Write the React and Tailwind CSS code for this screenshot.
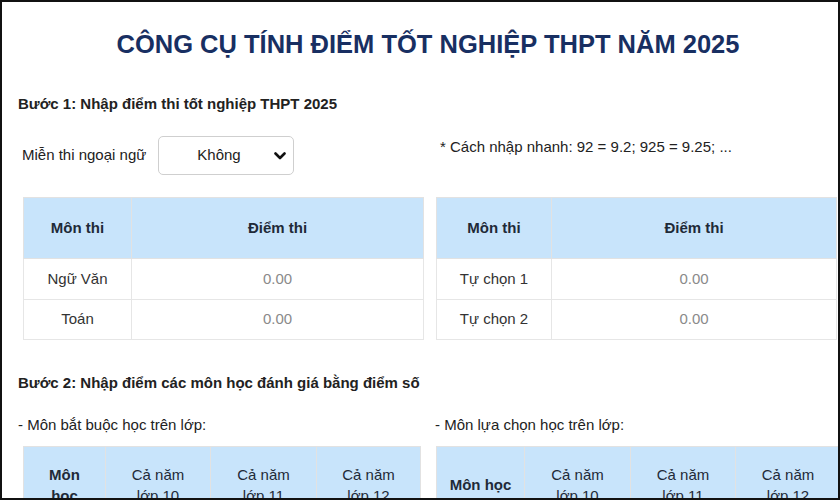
import React from "react";

const font = { fontFamily: '"Liberation Sans", Arial, sans-serif' };

function ChevronDown() {
  return (
    <svg width="12" height="8" viewBox="0 0 12 8" fill="none">
      <path d="M1.5 1.5 L6 6 L10.5 1.5" stroke="#111" strokeWidth="2.6" strokeLinecap="round" strokeLinejoin="round" />
    </svg>
  );
}

function ExamTable({ rows, firstCol }) {
  return (
    <table className="w-full table-fixed border-collapse text-[15px]">
      <colgroup>
        <col className={firstCol} />
        <col />
      </colgroup>
      <thead>
        <tr className="h-[61px] bg-[#c8e4fb]">
          <th className="border border-[#e2e2e2] font-bold text-[#1f2a38]">Môn thi</th>
          <th className="border border-[#e2e2e2] font-bold text-[#1f2a38]">Điểm thi</th>
        </tr>
      </thead>
      <tbody>
        {rows.map((r, i) => (
          <tr key={r} className={i === 0 ? "h-[41px]" : "h-[40px]"}>
            <td className="border border-[#e6e6e6] text-center text-[#333]">{r}</td>
            <td className="border border-[#e6e6e6] text-center text-[#8a8a8a]">0.00</td>
          </tr>
        ))}
      </tbody>
    </table>
  );
}

function YearTable({ cols, wrapFirst }) {
  return (
    <table className="table-fixed border-collapse text-[15px]">
      <colgroup>
        {cols.map((w, i) => (
          <col key={i} style={{ width: w }} />
        ))}
      </colgroup>
      <thead>
        <tr className="h-[76px] bg-[#c8e4fb] leading-[21px]">
          <th className="border border-[#e2e2e2] px-2 font-bold text-[#1f2a38]">
            {wrapFirst ? (
              <>
                Môn
                <br />
                học
              </>
            ) : (
              "Môn học"
            )}
          </th>
          {["10", "11", "12"].map((n) => (
            <th key={n} className="border border-[#e2e2e2] font-normal text-[#1f2a38]">
              Cả năm
              <br />
              lớp {n}
            </th>
          ))}
        </tr>
      </thead>
    </table>
  );
}

export default function App() {
  return (
    <div
      style={font}
      className="w-[840px] h-[500px] overflow-hidden border-2 border-[#111] bg-white text-[#222]"
    >
      <div className="pl-[16px] pt-[27px]">
        <h1 className="text-center text-[25.5px] leading-[30px] font-bold text-[#182f62]">
          CÔNG CỤ TÍNH ĐIỂM TỐT NGHIỆP THPT NĂM 2025
        </h1>
        <p className="mt-[35px] text-[15px] leading-[20px] font-bold">
          Bước 1: Nhập điểm thi tốt nghiệp THPT 2025
        </p>

        <div className="mt-[22px] grid grid-cols-[401px_401px] gap-x-[12px] pl-[5px]">
          <div className="flex items-center gap-[12px]">
            <span className="text-[15px] -ml-px">Miễn thi ngoại ngữ</span>
            <div className="flex h-[39px] w-[136px] items-center rounded-[5px] border border-[#cfcfcf] pl-[38px] pr-[7px]">
              <span className="text-[15px] flex-1">Không</span>
              <ChevronDown />
            </div>
          </div>
          <div className="pl-[4px] pt-[2px] text-[15px] leading-[18px]">
            * Cách nhập nhanh: 92 = 9.2; 925 = 9.25; ...
          </div>

          <div className="mt-[22px]">
            <ExamTable rows={["Ngữ Văn", "Toán"]} firstCol="w-[108px]" />
          </div>
          <div className="mt-[22px]">
            <ExamTable rows={["Tự chọn 1", "Tự chọn 2"]} firstCol="w-[115px]" />
          </div>
        </div>

        <p className="mt-[33px] text-[15px] leading-[20px] font-bold">
          Bước 2: Nhập điểm các môn học đánh giá bằng điểm số
        </p>

        <div className="mt-[22px] grid grid-cols-[417px_420px]">
          <div>
            <p className="text-[15px] leading-[20px]">- Môn bắt buộc học trên lớp:</p>
            <div className="mt-[11px] pl-[5px]">
              <YearTable cols={[82, 105, 106, 104]} wrapFirst />
            </div>
          </div>
          <div>
            <p className="text-[15px] leading-[20px]">- Môn lựa chọn học trên lớp:</p>
            <div className="mt-[11px] pl-[1px]">
              <YearTable cols={[88, 106, 105, 105]} />
            </div>
          </div>
        </div>
      </div>
    </div>
  );
}
